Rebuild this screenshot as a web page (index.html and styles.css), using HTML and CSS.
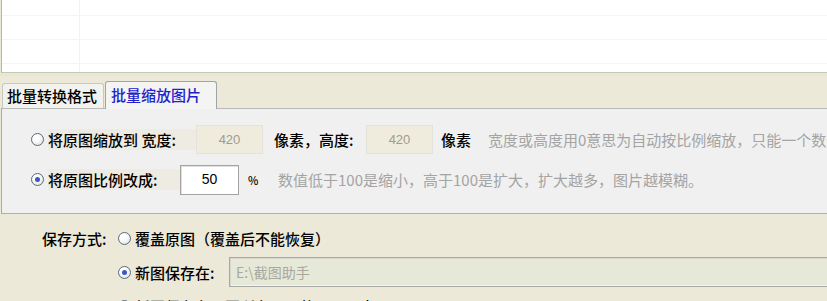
FILE: index.html
```html
<!DOCTYPE html>
<html lang="zh-CN">
<head>
    <meta charset="UTF-8">
    <title>批量缩放图片</title>
    <link rel="stylesheet" href="styles.css">
</head>
<body>

<div class="file-list">
    <div class="file-row head"><span class="cell first"></span><span class="cell"></span></div>
    <div class="file-row"><span class="cell first"></span><span class="cell"></span></div>
    <div class="file-row"><span class="cell first"></span><span class="cell"></span></div>
    <div class="file-row last"><span class="cell first"></span><span class="cell"></span></div>
</div>

<div class="tabs">
    <div class="tab">批量转换格式</div>
    <div class="tab active">批量缩放图片</div>
</div>

<div class="panel">
    <div class="opt-row first">
        <span class="radio"></span>
        <span class="label w-scale">将原图缩放到 宽度:</span>
        <span class="field disabled w-size">420</span>
        <span class="label w-px">像素，高度:</span>
        <span class="field disabled w-size">420</span>
        <span class="label w-unit">像素</span>
        <span class="hint">宽度或高度用0意思为自动按比例缩放，只能一个数值为0</span>
    </div>
    <div class="opt-row">
        <span class="radio checked"></span>
        <span class="label w-ratio">将原图比例改成:</span>
        <span class="field w-pct">50</span>
        <span class="label w-sign">%</span>
        <span class="hint">数值低于100是缩小，高于100是扩大，扩大越多，图片越模糊。</span>
    </div>
</div>

<div class="save">
    <div class="save-row">
        <span class="label w-save">保存方式:</span>
        <span class="radio"></span>
        <span class="label">覆盖原图（覆盖后不能恢复）</span>
    </div>
    <div class="save-row indent">
        <span class="radio checked"></span>
        <span class="label w-path">新图保存在:</span>
        <span class="path">E:\截图助手</span>
    </div>
    <div class="save-row indent">
        <span class="radio checked"></span>
        <span class="label">新图保存在原图所在目录的子目录中</span>
    </div>
</div>

</body>
</html>
```

FILE: styles.css
```css
body {
    margin: 0;
    width: 827px;
    height: 301px;
    overflow: hidden;
    background: #ece9d8;
    font-family: "Noto Sans CJK SC", "Liberation Sans", sans-serif;
    font-size: 15px;
    color: #000;
}
.file-list {
    height: 72px;
    background: #fff;
    border-left: 1px solid #b4b4b4;
    margin-left: 1px;
    border-bottom: 1px solid #c4c8b4;
}
.file-row {
    display: flex;
    height: 23px;
    border-bottom: 1px solid #f4f4f4;
}
.file-row.head {
    height: 15px;
}
.file-row.last {
    height: 8px;
    border-bottom: none;
}
.cell {
    flex: 1;
}
.cell.first {
    flex: 0 0 77px;
    border-right: 1px solid #f2f2f6;
}
.tabs {
    display: flex;
    align-items: flex-end;
    height: 35px;
    padding-left: 2px;
    border-top: 3px solid #e4e8d4;
    box-sizing: border-box;
}
.tab {
    height: 24px;
    line-height: 24px;
    padding: 0 4px;
    width: 92px;
    border: 1px solid #c8c8c0;
    border-bottom: none;
    border-radius: 3px 3px 0 0;
    background: #f2f2ee;
    font-weight: 500;
}
.tab.active {
    width: 101px;
    height: 27px;
    line-height: 26px;
    padding: 0 4px 0 5px;
    margin-left: 1px;
    background: #f4f4f2;
    border-color: #a0a4a4;
    color: #2222cc;
    position: relative;
    top: 1px;
}
.panel {
    height: 106px;
    box-sizing: border-box;
    background: #f0f0f0;
    border-top: 1px solid #b8bab8;
    border-left: 1px solid #a8aaa8;
    border-bottom: 1px solid #b0b0b0;
    margin-left: 1px;
    padding-top: 16px;
    padding-left: 29px;
}
.opt-row {
    display: flex;
    align-items: center;
    height: 29px;
    margin-top: 11px;
}
.opt-row.first {
    margin-top: 0;
}
.radio {
    flex: 0 0 13px;
    height: 13px;
    box-sizing: border-box;
    border: 1px solid #5c6a7c;
    border-radius: 50%;
    background: radial-gradient(circle at 40% 35%, #ffffff 30%, #d8d8d0 100%);
    margin-right: 4px;
    position: relative;
}
.radio.checked::after {
    content: "";
    position: absolute;
    left: 3px;
    top: 3px;
    width: 5px;
    height: 5px;
    border-radius: 50%;
    background: #3d56c8;
}
.label {
    white-space: nowrap;
    flex: none;
    background: #edebe2;
    font-weight: 500;
}
.w-scale { width: 148px; }
.w-px { width: 92px; margin-left: 11px; background: none; }
.w-unit { width: 47px; margin-left: 8px; background: none; }
.w-ratio { width: 132px; }
.w-sign { width: 30px; margin-left: 9px; font-size: 11px; background: none; }
.field {
    flex: none;
    height: 29px;
    box-sizing: border-box;
    line-height: 27px;
    text-align: center;
    font-family: "Liberation Sans", sans-serif;
    font-size: 14px;
    border: 1px solid #d4d4cc;
    background: #fff;
}
.field.disabled {
    background: #efebdd;
    color: #9c9c94;
    font-size: 13px;
    border-color: #e4e2da;
}
.w-size { width: 67px; }
.w-pct {
    width: 59px;
    height: 30px;
    border: 1px solid #a4a4a4;
    box-shadow: inset 1px 1px 0 #e0e0e0;
}
.hint {
    white-space: nowrap;
    color: #a4a4a4;
    font-size: 15px;
}
.save {
    padding-top: 9px;
}
.save-row {
    display: flex;
    align-items: center;
    height: 30px;
    margin-bottom: 4px;
    padding-left: 42px;
}
.save-row .label {
    background: none;
}
.save-row.indent {
    padding-left: 118px;
}
.w-save {
    width: 76px;
}
.w-path {
    width: 94px;
}
.path {
    flex: 1;
    height: 30px;
    box-sizing: border-box;
    border: 1px solid #a8a8a8;
    box-shadow: inset 1px 1px 0 #d8d8d0, inset -1px -1px 0 #f4f4f0;
    background: #e6e9d8;
    color: #a8a8a0;
    font-size: 14px;
    line-height: 28px;
    padding-left: 6px;
    margin-right: -10px;
}
```
